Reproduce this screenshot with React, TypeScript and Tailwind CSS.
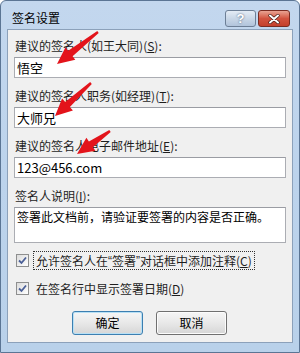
const font = { fontFamily: '"Noto Sans CJK SC", "Noto Sans", sans-serif' };

function arrowPoints(tail: [number, number], tip: [number, number]) {
  const dx = tip[0] - tail[0];
  const dy = tip[1] - tail[1];
  const len = Math.hypot(dx, dy);
  const ux = dx / len;
  const uy = dy / len;
  const nx = -uy;
  const ny = ux;
  const headLen = 17;
  const headHalf = 8;
  const bx = tip[0] - ux * headLen;
  const by = tip[1] - uy * headLen;
  const p = (x: number, y: number) => `${x.toFixed(1)},${y.toFixed(1)}`;
  return [
    p(tail[0] + nx * 1.2, tail[1] + ny * 1.2),
    p(bx + nx * 3.5, by + ny * 3.5),
    p(bx + nx * headHalf, by + ny * headHalf),
    p(tip[0], tip[1]),
    p(bx - nx * headHalf, by - ny * headHalf),
    p(bx - nx * 3.5, by - ny * 3.5),
    p(tail[0] - nx * 1.2, tail[1] - ny * 1.2),
  ].join(' ');
}

function Label({ text, k, after = '):' }: { text: string; k: string; after?: string }) {
  return (
    <div className="h-4 leading-4 text-[12px] text-[#1e1e1e] pl-[7px]">
      {text}(<span className="underline">{k}</span>{after}
    </div>
  );
}

function Field({ value }: { value: string }) {
  return (
    <div className="mt-[3px] mx-[6px] h-[21px] bg-white border border-[#abadb3] border-t-[#9a9ca3] flex items-center pl-[2px] text-[13px] text-black">
      {value}
    </div>
  );
}

function Check({ children, focused }: { children: React.ReactNode; focused?: boolean }) {
  return (
    <div className="flex items-center h-[19px] pl-[8px]">
      <div className="w-[13px] h-[13px] border border-[#8e8f8f] bg-gradient-to-br from-[#dcdcdc] to-white flex items-center justify-center">
        <svg width="9" height="9" viewBox="0 0 9 9">
          <path d="M1 4.5 L3.5 7 L8 1.5" fill="none" stroke="#4a5f97" strokeWidth="1.8" />
        </svg>
      </div>
      <div
        className={`ml-[4px] h-[19px] flex items-center px-[2px] text-[12px] text-[#1e1e1e] border border-dotted ${
          focused ? 'border-[#333]' : 'border-transparent'
        }`}
      >
        {children}
      </div>
    </div>
  );
}

function Btn({ children, primary }: { children: React.ReactNode; primary?: boolean }) {
  return (
    <div
      className={`w-[71px] h-[24px] rounded-[3px] border flex items-center justify-center text-[12px] text-black bg-gradient-to-b from-[#f6f6f6] via-[#e8e8e8] to-[#d6d6d6] ${
        primary ? 'border-[#3c7fb1] shadow-[inset_0_0_0_1px_#b8e0f5]' : 'border-[#707070] shadow-[inset_0_0_0_1px_#fcfcfc]'
      }`}
    >
      {children}
    </div>
  );
}

const latin = { fontFamily: '"Liberation Sans", sans-serif' };

export default function App() {
  return (
    <div className="relative w-[300px] h-[353px] overflow-hidden bg-white" style={font}>
      <div className="w-[300px] h-[353px] flex flex-col rounded-t-[6px] border border-[#5b7594] bg-gradient-to-b from-[#c3d7ee] via-[#bcd3ec] to-[#b9d1ea]">
        {/* title bar */}
        <div className="h-[28px] flex items-start relative">
          <div className="pl-[11px] pt-[9px] text-[12px] leading-4 text-black">签名设置</div>
          <div className="ml-auto mr-[9px] mt-[9px] flex gap-[2px]">
            <div
              className="w-[31px] h-[17px] rounded-[3px] border border-[#6d7f96] bg-gradient-to-b from-[#e4ecf5] via-[#c9d7e7] to-[#b1c4db] flex items-center justify-center text-[13px] leading-none font-bold text-white [text-shadow:0_0_2px_#3b4f6b]"
              style={latin}
            >
              ?
            </div>
            <div className="w-[32px] h-[17px] rounded-[3px] border border-[#7a2c22] bg-gradient-to-b from-[#e8a393] via-[#d2533f] to-[#c4402c] flex items-center justify-center">
              <svg width="12" height="10" viewBox="0 0 12 10">
                <path d="M2 1.5 L10 8.5 M10 1.5 L2 8.5" stroke="#3b1510" strokeWidth="3.2" strokeLinecap="round" />
                <path d="M2 1.5 L10 8.5 M10 1.5 L2 8.5" stroke="#ffffff" strokeWidth="2" strokeLinecap="round" />
              </svg>
            </div>
          </div>
        </div>
        {/* client area */}
        <div className="flex-1 mx-[6px] mb-[9px] border border-[#8ca1ba] bg-[#f0f0f0] pt-[8px] flex flex-col">
          <Label text="建议的签名人(如王大同)" k="S" />
          <Field value="悟空" />
          <div className="mt-[10px]">
            <Label text="建议的签名人职务(如经理)" k="T" />
          </div>
          <Field value="大师兄" />
          <div className="mt-[10px]">
            <Label text="建议的签名人电子邮件地址" k="E" />
          </div>
          <Field value="123@456.com" />
          <div className="mt-[10px]">
            <Label text="签名人说明" k="I" />
          </div>
          <div className="mt-[3px] mx-[6px] h-[36px] bg-white border border-[#abadb3] border-t-[#9a9ca3] pl-[2px] pt-[1px] text-[12px] leading-4 text-black">
            签署此文档前，请验证要签署的内容是否正确。
          </div>
          <div className="mt-[8px]">
            <Check focused>
              允许签名人在<span style={latin}>“</span>签署<span style={latin}>”</span>对话框中添加注释(
              <span className="underline">C</span>)
            </Check>
          </div>
          <div className="mt-[9px]">
            <Check>
              在签名行中显示签署日期(<span className="underline">D</span>)
            </Check>
          </div>
          <div className="mt-[13px] flex pl-[64px] gap-[13px]">
            <Btn primary>确定</Btn>
            <Btn>取消</Btn>
          </div>
        </div>
      </div>
      <svg className="absolute inset-0 pointer-events-none" width="300" height="353">
        <polygon points={arrowPoints([98, 32], [57, 64])} fill="#e3141b" />
        <polygon points={arrowPoints([91, 83], [55, 116])} fill="#e3141b" />
        <polygon points={arrowPoints([110, 131], [77, 154])} fill="#e3141b" />
      </svg>
    </div>
  );
}
